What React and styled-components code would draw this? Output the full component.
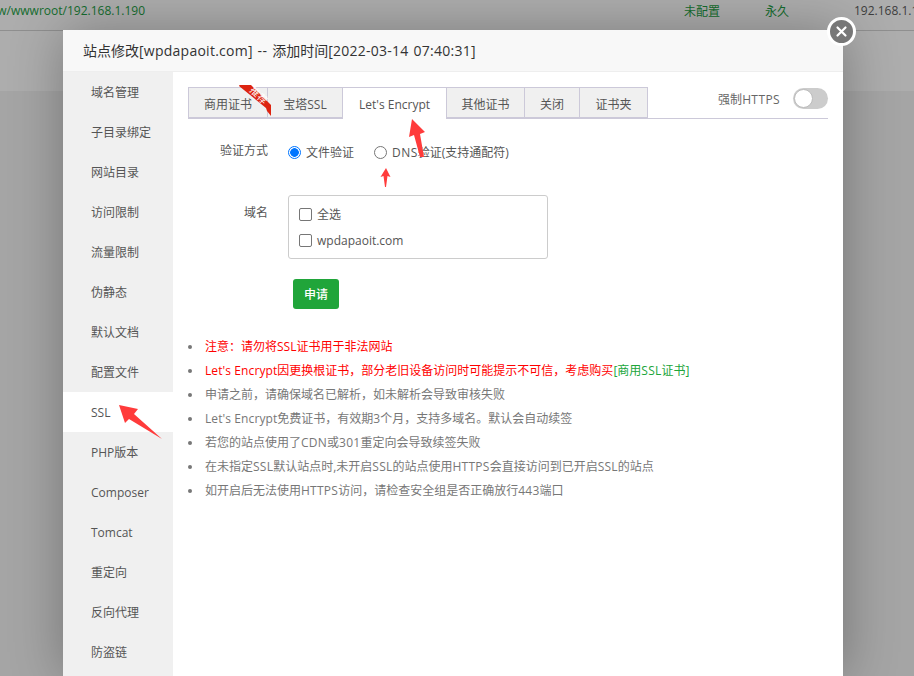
import React from "react";
import styled, { createGlobalStyle } from "styled-components";

const Global = createGlobalStyle`
  html, body {
    margin: 0;
    height: 100%;
    overflow: hidden;
    background: #a5a5a5;
  }
  body {
    font-family: "Open Sans", "Noto Sans CJK SC", sans-serif;
    font-size: 12px;
    color: #555;
  }
`;

const Page = styled.div`
  width: 914px;
  height: 676px;
  position: relative;
  overflow: hidden;
  background: #a5a5a5;
`;
const TopRow = styled.div`
  height: 31px;
  box-sizing: border-box;
  border-bottom: 1px solid #8f8f8f;
  background: #adadad;
  display: flex;
  align-items: center;
  padding-bottom: 9px;
  white-space: nowrap;
`;
const Path = styled.span`
  color: #146c2e;
  width: 145px;
  margin-right: 539px;
  flex: none;
  display: flex;
  justify-content: flex-end;
`;
const Status = styled.span`
  color: #146c2e;
  width: ${(p) => p.$w}px;
  flex: none;
`;
const Ip = styled.span`
  color: #3d3d3d;
`;
const Strip = styled.div`
  height: 60px;
  background: #adadad;
`;

const Modal = styled.div`
  position: absolute;
  left: 63px;
  top: 30px;
  width: 780px;
  height: 646px;
  background: #fff;
  box-shadow: 1px 1px 50px rgba(0, 0, 0, 0.3);
  display: flex;
  flex-direction: column;
`;
const Header = styled.div`
  height: 41px;
  flex: none;
  background: #f8f8f8;
  border-bottom: 1px solid #eee;
  padding-left: 20px;
  line-height: 41px;
  font-size: 14px;
  color: #333;
  word-spacing: 1px;
`;
const CloseBtn = styled.button`
  position: absolute;
  top: -13px;
  right: -13px;
  width: 29px;
  height: 29px;
  padding: 0;
  box-sizing: border-box;
  border: 3px solid #fff;
  border-radius: 50%;
  background: #777;
  display: flex;
  align-items: center;
  justify-content: center;
`;
const Body = styled.div`
  flex: 1;
  display: flex;
  min-height: 0;
`;
const Side = styled.div`
  width: 110px;
  flex: none;
  background: #f0f0f0;
`;
const SideItem = styled.div`
  height: 40px;
  line-height: 42px;
  padding-left: 28px;
  color: #555;
  background: ${(p) => (p.$active ? "#fff" : "transparent")};
`;
const Content = styled.div`
  flex: 1;
  padding: 15px 15px 0;
  position: relative;
`;
const TabBar = styled.div`
  display: flex;
  height: 32px;
  box-sizing: border-box;
  border-bottom: 1px solid #ccc9d9;
  position: relative;
`;
const Tab = styled.div`
  width: ${(p) => p.$w}px;
  box-sizing: border-box;
  height: ${(p) => (p.$active ? 32 : 31)}px;
  line-height: 33px;
  text-align: center;
  color: #555;
  background: ${(p) => (p.$active ? "#fff" : "#f0f0f0")};
  border: 1px solid #ccc9d9;
  border-left-width: ${(p) => (p.$first ? 1 : 0)}px;
  border-bottom-width: ${(p) => (p.$active ? 0 : 1)}px;
`;
const Ribbon = styled.svg`
  position: absolute;
  left: 50px;
  top: -3px;
`;
const Force = styled.div`
  position: absolute;
  right: 0;
  top: 1px;
  height: 21px;
  display: flex;
  align-items: center;
  gap: 13px;
  color: #666;
`;
const Toggle = styled.div`
  width: 35px;
  height: 21px;
  border-radius: 11px;
  background: #ccc;
  position: relative;
`;
const Knob = styled.div`
  position: absolute;
  left: 1px;
  top: 1px;
  width: 17px;
  height: 17px;
  border-radius: 50%;
  border: 1px solid #bbb;
  background: #fff;
`;
const Row = styled.div`
  display: flex;
  align-items: ${(p) => p.$align || "center"};
  margin-top: ${(p) => p.$top}px;
`;
const Label = styled.div`
  width: 80px;
  text-align: right;
  color: #555;
  flex: none;
  margin-top: ${(p) => p.$top || 0}px;
  padding-bottom: ${(p) => p.$lift || 0}px;
`;
const Radios = styled.div`
  display: flex;
  margin-left: 20px;
`;
const RadioWrap = styled.label`
  display: flex;
  align-items: center;
  gap: 5px;
  width: ${(p) => p.$w}px;
  color: #555;
  white-space: nowrap;
`;
const RadioDot = styled.span`
  width: 13px;
  height: 13px;
  box-sizing: border-box;
  border-radius: 50%;
  border: 1px solid ${(p) => (p.$on ? "#0075ff" : "#767676")};
  background: ${(p) => (p.$on ? "radial-gradient(circle, #0075ff 0 4px, #fff 4.6px)" : "#fff")};
`;
const DomainBox = styled.div`
  width: 260px;
  height: 64px;
  margin-left: 20px;
  box-sizing: border-box;
  border: 1px solid #ccc;
  border-radius: 3px;
  padding: 5px 10px;
`;
const CheckRow = styled.label`
  display: flex;
  align-items: center;
  gap: 5px;
  height: 26px;
  color: #555;
`;
const Box = styled.span`
  width: 13px;
  height: 13px;
  box-sizing: border-box;
  border: 1px solid #767676;
  border-radius: 2px;
  background: #fff;
`;
const Apply = styled.button`
  display: block;
  width: 46px;
  height: 30px;
  margin: 20px 0 0 105px;
  border: 0;
  border-radius: 3px;
  background: #20a53a;
  color: #fff;
  font: inherit;
  font-weight: 500;
  padding: 0;
`;
const Tips = styled.ul`
  list-style: none;
  margin: 26px 0 0;
  padding: 0;
`;
const Tip = styled.li`
  height: 24px;
  line-height: 24px;
  padding-left: 17px;
  position: relative;
  color: ${(p) => (p.$red ? "#f00" : "#777")};
  white-space: nowrap;
  &::before {
    content: "";
    position: absolute;
    left: 0;
    top: 10px;
    width: 4px;
    height: 4px;
    border-radius: 50%;
    background: #777;
  }
`;
const Green = styled.span`
  color: #20a53a;
`;
const Latin = styled.span`
  letter-spacing: ${(p) => p.$gap || 0.25}px;
`;
const Arrow = styled.svg`
  position: absolute;
  left: 0;
  top: 0;
  pointer-events: none;
`;

const menu = ["域名管理", "子目录绑定", "网站目录", "访问限制", "流量限制", "伪静态", "默认文档", "配置文件", "SSL", "PHP版本", "Composer", "Tomcat", "重定向", "反向代理", "防盗链"];
const tabs = [
  { name: "商用证书", w: 80 },
  { name: "宝塔SSL", w: 75 },
  { name: "Let's Encrypt", w: 104, active: true },
  { name: "其他证书", w: 78 },
  { name: "关闭", w: 55 },
  { name: "证书夹", w: 68 },
];

export default function App() {
  return (
    <Page>
      <Global />
      <TopRow>
        <Path>/www/wwwroot/192.168.1.190</Path>
        <Status $w={81}>未配置</Status>
        <Status $w={89}>永久</Status>
        <Ip>192.168.1.190</Ip>
      </TopRow>
      <Strip />
      <Modal>
        <Header>
          站点修改<Latin>[wpdapaoit.com]</Latin> <Latin $gap={0.6}>--</Latin> 添加时间<Latin>[2022-03-14 07:40:31]</Latin>
        </Header>
        <CloseBtn>
          <svg width="13" height="13" viewBox="0 0 13 13">
            <path d="M2.5 2.5l8 8M10.5 2.5l-8 8" stroke="#fff" strokeWidth="2.2" strokeLinecap="round" />
          </svg>
        </CloseBtn>
        <Body>
          <Side>
            {menu.map((m) => (
              <SideItem key={m} $active={m === "SSL"}>{m}</SideItem>
            ))}
          </Side>
          <Content>
            <TabBar>
              {tabs.map((t, i) => (
                <Tab key={t.name} $w={t.w} $active={t.active} $first={i === 0}>{t.name}</Tab>
              ))}
              <Ribbon width="35" height="35" viewBox="0 0 35 35">
                <path d="M1 2q0-1 1-1h11l20 20v11l-4-5-1-3z" fill="#dd2410" />
                <text x="21" y="15" fontSize="10" fill="#fff" textAnchor="middle" transform="rotate(45 21 11)">推荐</text>
              </Ribbon>
              <Force>
                <span>强制<Latin $gap={0.4}>HTTPS</Latin></span>
                <Toggle><Knob /></Toggle>
              </Force>
            </TabBar>
            <Row $top={22}>
              <Label $lift={4}>验证方式</Label>
              <Radios>
                <RadioWrap $w={86}><RadioDot $on />文件验证</RadioWrap>
                <RadioWrap $w={140}><RadioDot /><span><Latin $gap={0.5}>DNS</Latin>验证(支持通配符)</span></RadioWrap>
              </Radios>
            </Row>
            <Row $top={32} $align="flex-start">
              <Label $top={8}>域名</Label>
              <DomainBox>
                <CheckRow><Box />全选</CheckRow>
                <CheckRow><Box />wpdapaoit.com</CheckRow>
              </DomainBox>
            </Row>
            <Apply>申请</Apply>
            <Tips>
              <Tip $red>注意：请勿将SSL证书用于非法网站</Tip>
              <Tip $red><Latin $gap={0.1}>Let's Encrypt</Latin>因更换根证书，部分老旧设备访问时可能提示不可信，考虑购买<Green>[商用<Latin>SSL</Latin>证书]</Green></Tip>
              <Tip>申请之前，请确保域名已解析，如未解析会导致审核失败</Tip>
              <Tip><Latin $gap={0.1}>Let's Encrypt</Latin>免费证书，有效期3个月，支持多域名。默认会自动续签</Tip>
              <Tip>若您的站点使用了<Latin>CDN</Latin>或<Latin>301</Latin>重定向会导致续签失败</Tip>
              <Tip>在未指定<Latin>SSL</Latin>默认站点时,未开启<Latin>SSL</Latin>的站点使用<Latin>HTTPS</Latin>会直接访问到已开启<Latin>SSL</Latin>的站点</Tip>
              <Tip>如开启后无法使用<Latin>HTTPS</Latin>访问，请检查安全组是否正确放行<Latin>443</Latin>端口</Tip>
            </Tips>
          </Content>
        </Body>
      </Modal>
      <Arrow width="914" height="676" viewBox="0 0 914 676">
        <path d="M412 119l13 13-5 2 4 23-4 0-6-22-5 2z" fill="#ff3b3b" />
        <path d="M386 168l4.500 9-3-1-1.500 11h-1l-1.500-11-3 1z" fill="#ff3b3b" />
        <path d="M119 405l19 4-4 5 28 25-33-20-4 4z" fill="#ff3b3b" />
      </Arrow>
    </Page>
  );
}
